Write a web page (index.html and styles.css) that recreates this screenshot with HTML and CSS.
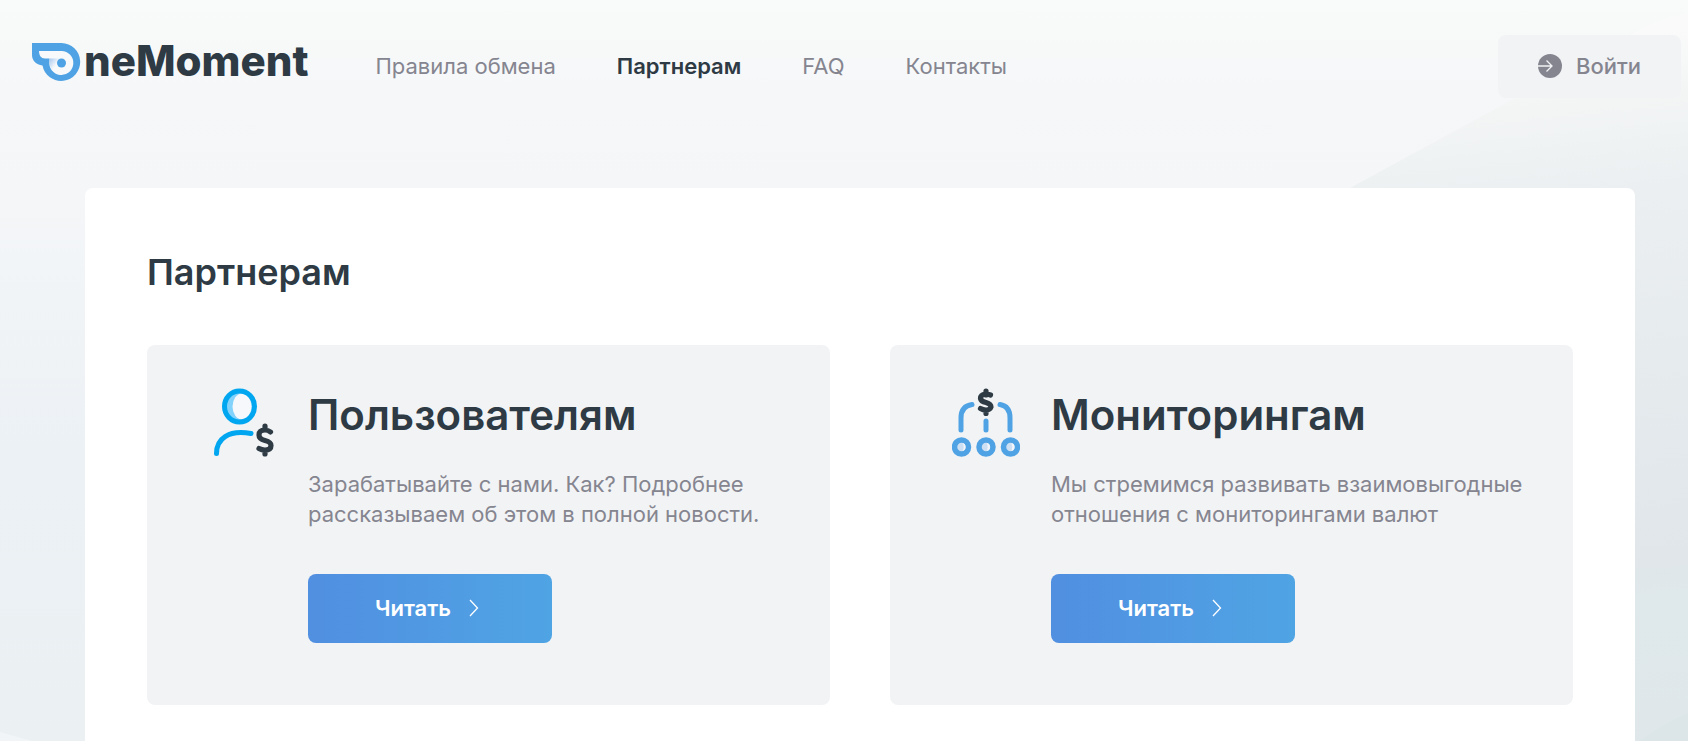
FILE: index.html
```html
<!DOCTYPE html>
<html lang="ru">
<head>
<meta charset="utf-8">
<title>OneMoment — Партнерам</title>
<link rel="stylesheet" href="styles.css">
</head>
<body>
<div class="page">
  <svg class="backdrop" viewBox="0 0 1688 741" preserveAspectRatio="none" aria-hidden="true">
    <defs>
      <linearGradient id="wave" gradientUnits="userSpaceOnUse" x1="1570" y1="40" x2="1640" y2="741">
        <stop offset="0" stop-color="#fafafa"/>
        <stop offset="0.09" stop-color="#f3f5f5"/>
        <stop offset="0.22" stop-color="#ebeff1"/>
        <stop offset="0.75" stop-color="#e0e6ea"/>
        <stop offset="0.8" stop-color="#dfe8ea"/>
        <stop offset="1" stop-color="#dfe7ea"/>
      </linearGradient>
    </defs>
    <path d="M1688 14Q1660 18 1634 33L1515 98L1350 188L1100 330V741H1688Z" fill="url(#wave)"/>
    <path d="M1640 741Q1662 724 1688 713V741Z" fill="#dce5e8"/>
    <path d="M0 732L32 741H0Z" fill="#f1f5f8"/>
  </svg>

  <header class="header">
    <a class="logo" href="#" aria-label="OneMoment">
      <svg class="logo-mark" viewBox="0 0 50 40" aria-hidden="true">
        <defs>
          <linearGradient id="shade" x1="0" y1="0" x2="1" y2="1">
            <stop offset="0" stop-color="#a9c9ef"/>
            <stop offset="0.6" stop-color="#f7f9fb"/>
          </linearGradient>
        </defs>
        <path d="M1 1H30.500A19 19 0 1 1 11.500 23.500C5 22.500 1 18.500 1 13Z" fill="#4fa3e4"/>
        <path d="M8 9H30.500A12 12 0 1 1 18.500 19V16.500H14C10 16.500 8 13.500 8 9Z" fill="#f7f9fb"/>
        <path d="M18.500 16.500H28L26 26L22 29Q18.500 25 18.500 20Z" fill="url(#shade)"/>
        <circle cx="30.500" cy="21" r="4.500" fill="#4fa3e4"/>
      </svg>
      <span class="logo-text">neMoment</span>
    </a>
    <nav class="nav">
      <a href="#">Правила обмена</a>
      <a class="active" href="#">Партнерам</a>
      <a href="#">FAQ</a>
      <a href="#">Контакты</a>
    </nav>
    <button class="login" type="button">
      <svg class="login-icon" viewBox="0 0 24 24" aria-hidden="true">
        <circle cx="12" cy="12" r="12" fill="#858590"/>
        <path d="M0 12H13.500M8.500 6.500L14 12L8.500 17.500" fill="none" stroke="#f2f3f5" stroke-width="1.300"/>
      </svg>
      <span>Войти</span>
    </button>
  </header>

  <main class="main">
    <section class="panel">
      <h1 class="title">Партнерам</h1>
      <div class="cards">
        <article class="card">
          <svg class="card-icon" viewBox="0 0 68 70" aria-hidden="true">
            <ellipse cx="30.500" cy="18.500" rx="15" ry="15.500" fill="#82d2fb"/>
            <ellipse cx="33" cy="18.500" rx="9.500" ry="13" fill="#f6f8fb"/>
            <ellipse cx="30.500" cy="18.500" rx="15" ry="15.500" fill="none" stroke="#00a6ef" stroke-width="5"/>
            <path d="M7.500 65.500C7.500 51 19 41.500 42 45.500" fill="none" stroke="#00a6ef" stroke-width="5" stroke-linecap="round"/>
            <path d="M56 38V42M56 62V66M61.500 44Q59 42 56 42Q50 42 50 47Q50 51 56 52.500Q62 54 62 57.500Q62 62 56 62Q52.500 62 50 60.500" fill="none" stroke="#2e3a44" stroke-width="5.200" stroke-linecap="round"/>
          </svg>
          <div class="card-body">
            <h2 class="card-title">Пользователям</h2>
            <p class="card-text">Зарабатывайте с нами. Как? Подробнее<br>рассказываем об этом в полной новости.</p>
            <button class="read" type="button">
              <span>Читать</span>
              <svg class="chevron" viewBox="0 0 10 18" aria-hidden="true"><path d="M1 1L8.500 9L1 17" fill="none" stroke="#fff" stroke-width="1.300"/></svg>
            </button>
          </div>
        </article>
        <article class="card">
          <svg class="card-icon" viewBox="0 0 68 70" aria-hidden="true">
            <g fill="none" stroke="#4fa3e4" stroke-width="5" stroke-linecap="round">
              <path d="M9 42V30Q9 18 20 16.500M58 42V30Q58 18 48 16.500M34 33V42"/>
            </g>
            <g fill="#cddff3" stroke="#4fa3e4" stroke-width="5.500">
              <circle cx="9.500" cy="59" r="7"/>
              <circle cx="34" cy="59" r="7"/>
              <circle cx="58.500" cy="59" r="7"/>
            </g>
            <g fill="#f2f5f9">
              <path d="M10.500 55Q13.500 55.500 13.500 59T10.500 63Q13 59 10.500 55Z"/>
              <path d="M35 55Q38 55.500 38 59T35 63Q36.500 59 35 55Z"/>
              <path d="M59.500 55Q62.500 55.500 62.500 59T59.500 63Q61 59 59.500 55Z"/>
            </g>
            <path d="M34 3V7M34 22V25.500M38.500 7Q36 6 33.500 6Q28.500 6.500 28.500 10.500Q29 13.500 34 14.500Q39 16 39 19Q38 22 34 22Q31 22 28.500 20.500" fill="none" stroke="#2e3a44" stroke-width="5.200" stroke-linecap="round"/>
          </svg>
          <div class="card-body">
            <h2 class="card-title">Мониторингам</h2>
            <p class="card-text">Мы стремимся развивать взаимовыгодные<br>отношения с мониторингами валют</p>
            <button class="read" type="button">
              <span>Читать</span>
              <svg class="chevron" viewBox="0 0 10 18" aria-hidden="true"><path d="M1 1L8.500 9L1 17" fill="none" stroke="#fff" stroke-width="1.300"/></svg>
            </button>
          </div>
        </article>
      </div>
    </section>
  </main>
</div>
</body>
</html>
```
FILE: styles.css
```css
* {
  box-sizing: border-box;
}

body {
  margin: 0;
  font-family: Inter, "Noto Sans", sans-serif;
  font-size: 22px;
  color: #2e3a44;
}

.page {
  position: relative;
  display: flex;
  flex-direction: column;
  min-height: 100vh;
  background: linear-gradient(180deg, #f9fbfa 0, #f7f9f9 50px, #f5f7f9 90px, #f4f6f8 200px, #ecf1f5 450px, #ebf0f3 100%);
}

.backdrop {
  position: absolute;
  inset: 0;
  width: 100%;
  height: 100%;
}

.header {
  position: relative;
  display: flex;
  align-items: center;
  padding: 35px 7px 0 31px;
}

.logo {
  display: flex;
  align-items: center;
  gap: 3px;
  height: 54px;
  align-self: flex-start;
  color: inherit;
  text-decoration: none;
}

.logo-mark {
  width: 50px;
  height: 40px;
}

.logo-text {
  padding-bottom: 2px;
  font-size: 42px;
  font-weight: 800;
  line-height: 52px;
}

.nav {
  display: flex;
  gap: 61px;
  margin-left: 67px;
  padding-bottom: 2px;
}

.nav a {
  color: #858590;
  line-height: 30px;
  text-decoration: none;
}

.nav .active {
  color: #2e3a44;
  font-weight: 600;
}

button {
  border: 0;
  border-radius: 8px;
  font: inherit;
  font-weight: 600;
  cursor: pointer;
}

.login {
  display: flex;
  align-items: center;
  justify-content: space-between;
  width: 183px;
  height: 63px;
  margin-left: auto;
  padding: 0 40px 1px;
  background: #f2f3f5;
  color: #858590;
  font-weight: 500;
}

.login-icon {
  width: 24px;
  height: 24px;
}

.main {
  position: relative;
  display: flex;
  flex: 1;
  padding: 90px 53px 0 85px;
}

.panel {
  flex: 1;
  padding: 62px 62px 36px;
  border-radius: 8px 8px 0 0;
  background: #fff;
}

.title {
  margin: 0 0 51px;
  font-size: 36px;
  font-weight: 600;
  line-height: 44px;
}

.cards {
  display: grid;
  grid-template-columns: 1fr 1fr;
  gap: 60px;
}

.card {
  display: flex;
  gap: 31px;
  padding: 43px 0 62px 62px;
  border-radius: 8px;
  background: #f2f3f5;
}

.card-icon {
  flex: none;
  width: 68px;
  height: 70px;
}

.card-title {
  margin: 0 0 27px;
  font-size: 42px;
  font-weight: 600;
  line-height: 54px;
}

.card-text {
  margin: 0 0 45px;
  color: #858590;
  line-height: 30px;
  white-space: nowrap;
}

.read {
  display: flex;
  align-items: center;
  justify-content: center;
  gap: 18px;
  width: 244px;
  height: 69px;
  padding: 0 6px 1px 0;
  background: linear-gradient(90deg, #518fe1, #4fa4e4);
  color: #fff;
}

.chevron {
  width: 10px;
  height: 18px;
}
```
